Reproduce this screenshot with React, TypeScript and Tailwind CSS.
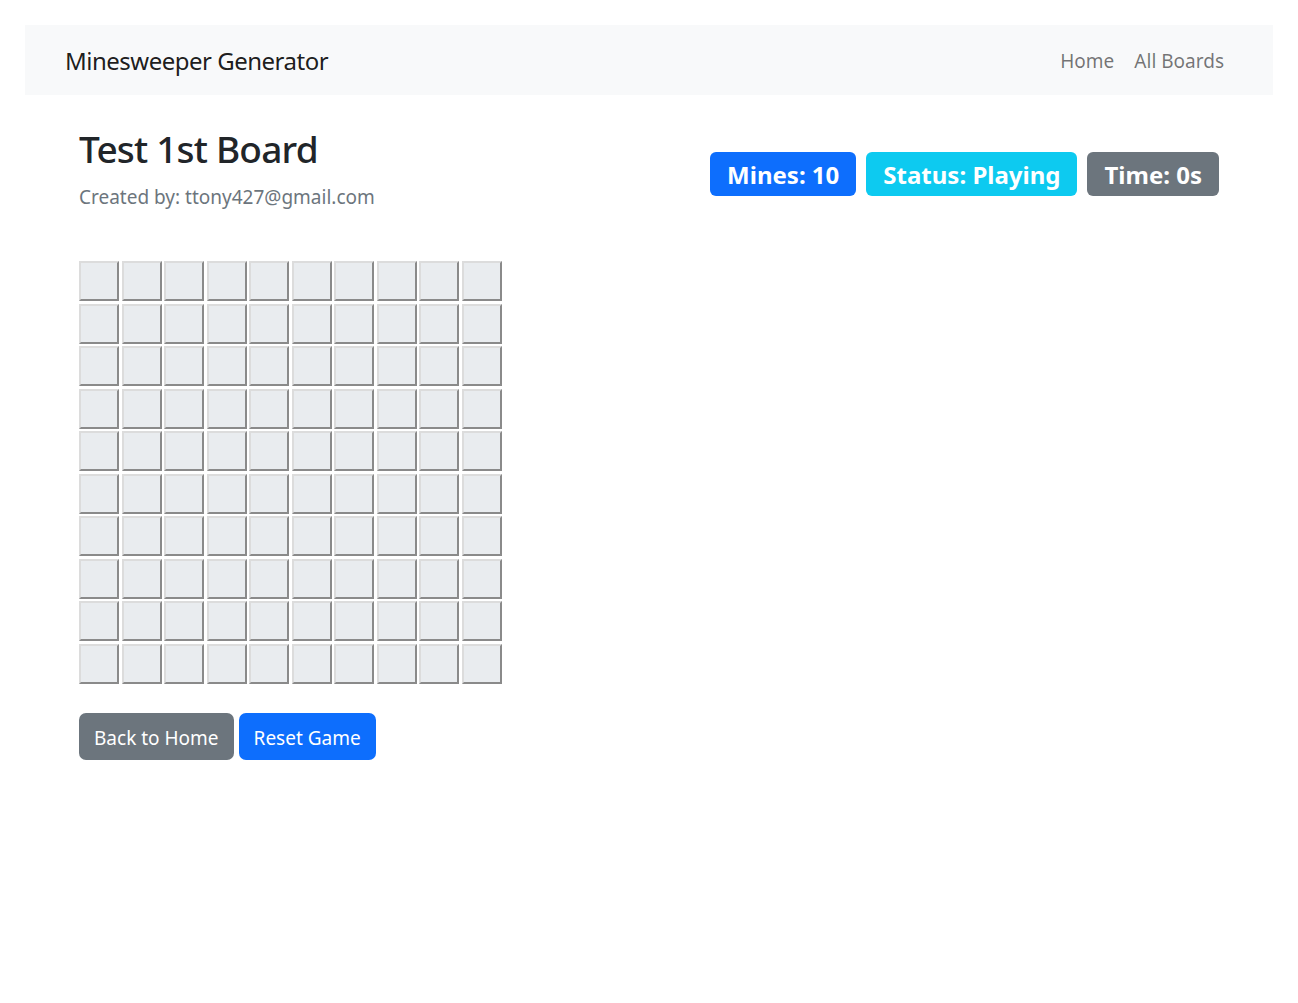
import React from "react";

const ROWS = 10;
const COLS = 10;

export default function App() {
  const cells = Array.from({ length: ROWS * COLS });
  return (
    <div
      className="min-h-[1003px] bg-white p-[25px] text-[#212529]"
      style={{ fontFamily: '"Noto Sans", "Open Sans", sans-serif' }}
    >
      <nav className="h-[70px] bg-[#f8f9fa]">
        <div className="mx-auto flex h-full w-[1200px] items-center justify-between px-[15px]">
          <span className="ml-[1px] text-[24px] leading-[37px] tracking-[-0.5px] text-[rgba(0,0,0,0.9)]">
            Minesweeper Generator
          </span>
          <div className="flex items-center pt-[2px]">
            <a className="px-[10px] text-[19px] leading-[30px] text-[rgba(0,0,0,0.55)]">Home</a>
            <a className="px-[10px] text-[19px] leading-[30px] text-[rgba(0,0,0,0.55)]">All Boards</a>
          </div>
        </div>
      </nav>

      <main className="mx-auto w-[1140px] pt-[30px]">
        <div className="flex items-start justify-between">
          <div>
            <h2 className="mb-[10px] text-[37px] font-medium leading-[48px] tracking-[-0.8px] text-[#212529]">
              Test 1st Board
            </h2>
            <p className="text-[19px] leading-[28px] text-[#6c757d]">
              Created by: ttony427@gmail.com
            </p>
          </div>
          <div className="mt-[27px] flex gap-[10px]">
            <span className="rounded-[6px] bg-[#0d6efd] px-[17px] pt-[10px] pb-[8px] text-[24px] font-bold leading-[26px] text-white">
              Mines: 10
            </span>
            <span className="rounded-[6px] bg-[#0dcaf0] px-[17px] pt-[10px] pb-[8px] text-[24px] font-bold leading-[26px] text-white">
              Status: Playing
            </span>
            <span className="rounded-[6px] bg-[#6c757d] px-[17px] pt-[10px] pb-[8px] text-[24px] font-bold leading-[26px] text-white">
              Time: 0s
            </span>
          </div>
        </div>

        <div className="mt-[50px] grid w-max grid-cols-[repeat(10,40px)] gap-[2.5px]">
          {cells.map((_, i) => (
            <div
              key={i}
              className="h-[40px] w-[40px] border-2 border-t-[#dcdcdc] border-l-[#dcdcdc] border-b-[#8a8a8a] border-r-[#8a8a8a] bg-[#e9ecef]"
            />
          ))}
        </div>

        <div className="mt-[29px] flex gap-[5px]">
          <button className="h-[47px] rounded-[7px] bg-[#6c757d] px-[15px] pt-[3px] text-[19px] leading-[30px] text-white">
            Back to Home
          </button>
          <button className="h-[47px] rounded-[7px] bg-[#0d6efd] px-[15px] pt-[3px] text-[19px] leading-[30px] text-white">
            Reset Game
          </button>
        </div>
      </main>
    </div>
  );
}
